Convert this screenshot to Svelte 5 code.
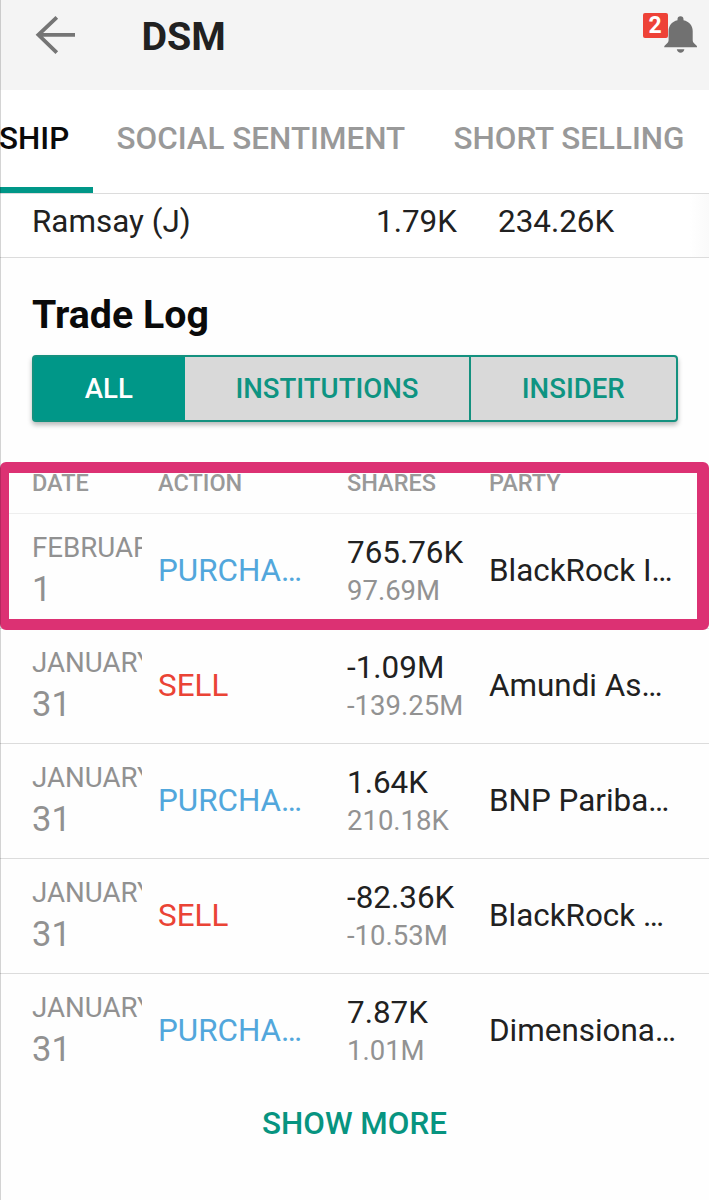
<script>
  const trades = [
    { month: 'FEBRUARY', day: 1, action: 'PURCHA…', kind: 'buy', shares: '765.76K', value: '97.69M', party: 'BlackRock I…' },
    { month: 'JANUARY', day: 31, action: 'SELL', kind: 'sell', shares: '-1.09M', value: '-139.25M', party: 'Amundi As…' },
    { month: 'JANUARY', day: 31, action: 'PURCHA…', kind: 'buy', shares: '1.64K', value: '210.18K', party: 'BNP Pariba…' },
    { month: 'JANUARY', day: 31, action: 'SELL', kind: 'sell', shares: '-82.36K', value: '-10.53M', party: 'BlackRock …' },
    { month: 'JANUARY', day: 31, action: 'PURCHA…', kind: 'buy', shares: '7.87K', value: '1.01M', party: 'Dimensiona…' }
  ];
</script>

<div class="screen">
  <header>
    <svg class="back" width="42" height="42" viewBox="0 0 42 42" fill="none" stroke="#757575" stroke-width="3.8">
      <path d="M41 20.8H4M22.8 3.4L4.4 20.8L22.8 38.6" />
    </svg>
    <h1>DSM</h1>
    <div class="alerts">
      <span class="badge">2</span>
      <svg width="34" height="38" viewBox="0 0 34 38" fill="#717171">
        <path d="M16.5 0.3c-1.9 0-3 1.3-3 3v1C8 5.600 4.600 9.500 4.600 15v9.300c0 1.700-1.400 3.100-3.200 4.600C.6 29.600.2 30.200.2 31.200h32.900c0-1-.4-1.600-1.200-2.300-1.900-1.500-3.200-2.900-3.200-4.600V15c0-5.500-3.600-9.400-9.200-10.700v-1c0-1.700-1.100-3-3-3z" />
        <path d="M12.800 33.300h7.600c-.4 2.200-1.900 3.500-3.800 3.500s-3.400-1.300-3.800-3.500z" />
      </svg>
    </div>
  </header>

  <nav>
    <span class="tab active">SHIP</span>
    <span class="tab social">SOCIAL SENTIMENT</span>
    <span class="tab short">SHORT SELLING</span>
  </nav>

  <div class="holder">
    <span>Ramsay (J)</span>
    <span>1.79K</span>
    <span>234.26K</span>
  </div>

  <h2>Trade Log</h2>

  <div class="toggle">
    <button class="on">ALL</button>
    <button>INSTITUTIONS</button>
    <button>INSIDER</button>
  </div>

  <section>
    <div class="cols head">
      <span>DATE</span><span>ACTION</span><span>SHARES</span><span>PARTY</span>
    </div>
    {#each trades as t}
      <div class="cols row">
        <div class="date"><span class="month">{t.month}</span><span class="day">{t.day}</span></div>
        <span class={t.kind}>{t.action}</span>
        <div class="amount"><span>{t.shares}</span><span class="value">{t.value}</span></div>
        <span>{t.party}</span>
      </div>
    {/each}
    <div class="highlight"></div>
  </section>

  <div class="more">SHOW MORE</div>
</div>

<style>
  :global(body) { background: #fff; }
  .screen {
    position: relative;
    box-sizing: border-box;
    width: 709px;
    height: 1200px;
    overflow: hidden;
    display: flex;
    flex-direction: column;
    background: #fefefe;
    color: #212121;
    font-family: Roboto, sans-serif;
    font-size: 31.400px;
    white-space: nowrap;
  }
  .screen::after {
    content: '';
    position: absolute;
    inset: 0 auto 0 0;
    width: 1px;
    background: rgba(0, 0, 0, 0.17);
  }
  header {
    display: flex;
    height: 90px;
    flex: none;
    background: #f4f4f4;
  }
  .back { margin: 14px 0 0 34px; }
  h1 {
    margin: 14px 0 0 65.500px;
    font-size: 39.400px;
    line-height: 46px;
    font-weight: 700;
  }
  .alerts { display: flex; margin: 12px 11.500px 0 auto; }
  .badge {
    width: 25px;
    height: 25px;
    margin: 0.500px -4px 0 0;
    border-radius: 2px;
    background: #ee4237;
    color: #fff;
    font-size: 23px;
    font-weight: 700;
    line-height: 25px;
    text-align: center;
  }
  .alerts svg { margin-top: 4px; }
  nav {
    display: flex;
    flex: none;
    box-sizing: border-box;
    height: 104px;
    border-bottom: 1px solid #dcdcdc;
    background: #fff;
    color: #999;
    font-weight: 500;
    line-height: 97px;
  }
  .tab { box-sizing: border-box; height: 103px; }
  .active {
    width: 93px;
    border-bottom: 6px solid #009788;
    color: #0a0a0a;
    text-indent: -1px;
  }
  .social { width: 337px; padding-left: 23.500px; }
  .short { padding-left: 23.500px; }
  .holder {
    display: grid;
    flex: none;
    grid-template-columns: 344px 122px 1fr;
    box-sizing: border-box;
    height: 64px;
    padding-left: 32px;
    border-bottom: 1px solid #dcdcdc;
    line-height: 55px;
    background: linear-gradient(to right, #fff 690px, #fafafa 709px);
  }
  h2 {
    flex: none;
    margin: 34px 0 16px 32px;
    font-size: 39.300px;
    line-height: 47px;
    font-weight: 700;
    color: #0a0a0a;
  }
  .toggle {
    display: grid;
    flex: none;
    grid-template-columns: 151.500px 286px 1fr;
    box-sizing: border-box;
    width: 646px;
    height: 67px;
    margin: 0 0 0 31.500px;
    border-radius: 4px;
    border: 2px solid #14917f;
    background: #d9d9d9;
    box-shadow: 0 3px 5px rgba(0, 0, 0, 0.28);
  }
  button {
    padding: 0;
    border: 0;
    border-right: 2px solid #14917f;
    background: none;
    color: #0e9482;
    font: 500 27.600px/63px Roboto, sans-serif;
  }
  button:last-child { border-right: 0; }
  .on { background: #009788; border-right: 0; padding-right: 1px; color: #fff; }
  section {
    position: relative;
    flex: none;
    margin-top: 40px;
  }
  .cols {
    display: grid;
    box-sizing: border-box;
    grid-template-columns: 126px 189px 142px 1fr;
    align-items: center;
    padding-left: 32px;
  }
  .head {
    height: 52px;
    padding-bottom: 8px;
    border-bottom: 1px solid #eee;
    color: #999;
    font-size: 23.500px;
    font-weight: 500;
    line-height: 41px;
  }
  .row { height: 115px; border-bottom: 1px solid #dcdcdc; line-height: 36px; padding-bottom: 1px; }
  .row:nth-last-child(2) { border-bottom-color: transparent; }
  .date { width: 110px; overflow: hidden; padding-top: 2px; color: #919191; }
  .date span, .amount span { display: block; }
  .month { font-size: 27.700px; line-height: 36px; }
  .day { font-size: 34.500px; line-height: 47px; }
  .amount { line-height: 38px; padding-top: 2px; }
  .value { font-size: 27.500px; color: #929292; }
  .buy { color: #52a7dc; }
  .sell { color: #ea4335; }
  .highlight {
    position: absolute;
    inset: 0 0 auto 0;
    box-sizing: border-box;
    height: 168px;
    border: solid #dc3173;
    border-width: 11.500px 12px 11.500px 9.500px;
    border-radius: 6px;
  }
  .more {
    margin-top: 13px;
    color: #079480;
    font-weight: 500;
    line-height: 43px;
    text-align: center;
  }
</style>
